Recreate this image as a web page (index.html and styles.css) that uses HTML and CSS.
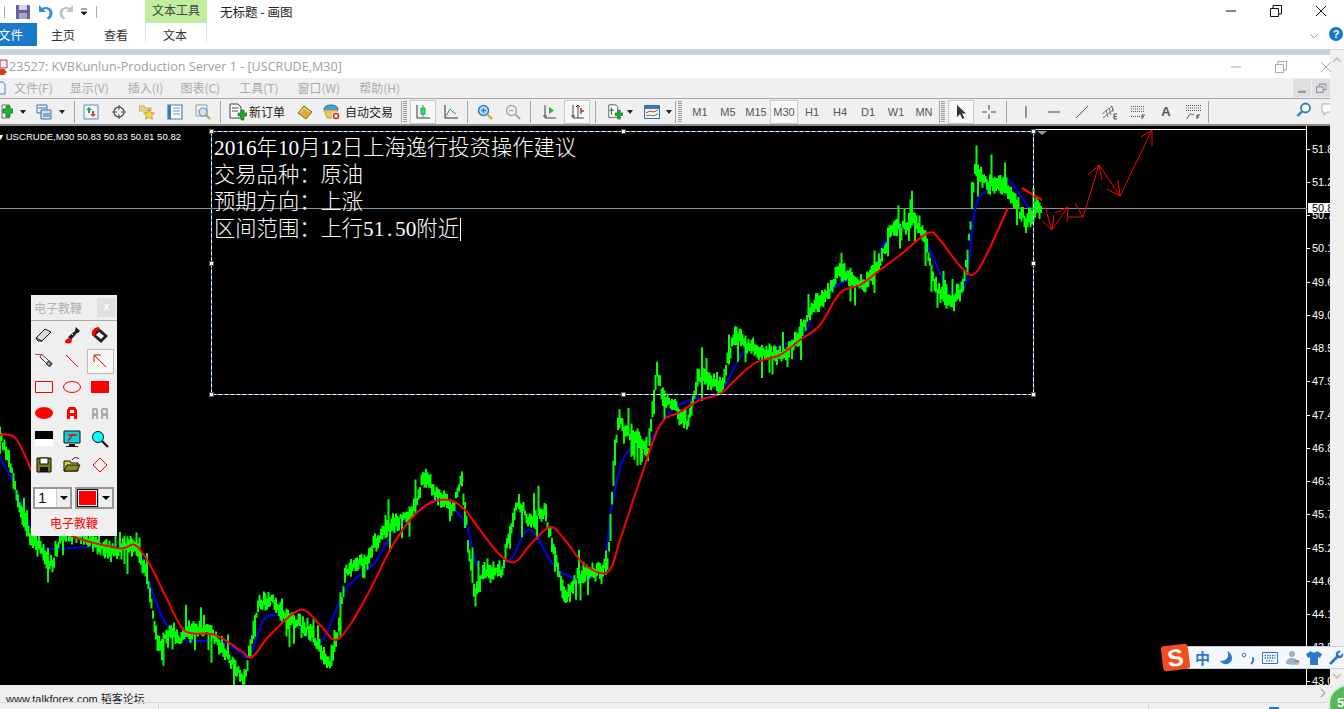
FILE: index.html
```html
<!DOCTYPE html>
<html lang="zh-CN">
<head>
<meta charset="utf-8">
<title>无标题 - 画图</title>
<link rel="stylesheet" href="styles.css">
</head>
<body>
<header class="ribbon">
  <div class="qat">
    <span class="qsep q1"></span>
    <svg class="qi" viewBox="0 0 16 16"><path d="M1 1h13l1 1v13H1z" fill="#6a5f9e"/><path d="M4 1h8v5H4z" fill="#d8d4e8"/><path d="M4 9h8v6H4z" fill="#a9a2c8"/></svg>
    <svg class="qi" viewBox="0 0 16 16"><path d="M2 1v7h7L6.500 5.500C9 4 12.500 5.500 12.500 9c0 2-1 4-3 5l2 1.500c3-1.500 4-4 4-6.500 0-5-6-7.500-10.500-5z" fill="#2f8fdc"/></svg>
    <svg class="qi" viewBox="0 0 16 16"><path d="M14 1v7H7l2.500-2.500C7 4 3.500 5.500 3.500 9c0 2 1 4 3 5l-2 1.500c-3-1.500-4-4-4-6.500 0-5 6-7.500 10.500-5z" fill="#b9c6d2"/></svg>
    <svg class="qdd" viewBox="0 0 8 8"><path d="M1 1h6M1 4h6L4 7z" fill="#222" stroke="#222" stroke-width=".8"/></svg>
    <span class="qsep q2"></span>
    <span class="ctx-head">文本工具</span>
    <span class="doc-title">无标题 - 画图</span>
    <div class="winbtns">
      <svg viewBox="0 0 12 12"><path d="M1 6h10" stroke="#111"/></svg>
      <svg viewBox="0 0 12 12"><path d="M.5 3.500h8v8h-8zM3 3V.500h8.500V9H9" fill="none" stroke="#111"/></svg>
      <svg viewBox="0 0 12 12"><path d="M1 1l10 10M11 1L1 11" stroke="#111"/></svg>
    </div>
  </div>
  <nav class="tabs">
    <span class="tab-file">文件</span>
    <span class="tab tab-home">主页</span>
    <span class="tab tab-view">查看</span>
    <span class="tab-text">文本</span>
    <svg class="chev" viewBox="0 0 10 6"><path d="M1 1l4 4 4-4" fill="none" stroke="#aaa"/></svg>
    <span class="help">?</span>
  </nav>
</header>
<div class="work">
  <main class="mt">
    <div class="band"></div>
    <div class="mt-title">
      <svg class="mt-ico" viewBox="0 0 8 16"><path d="M0 1h7v8H0z" fill="#e9eef5" stroke="#b33"/><path d="M0 10h4l3 3-3 3H0z" fill="#d43a1e"/></svg>
      <span>23527: KVBKunlun-Production Server 1 - [USCRUDE,M30]</span>
      <div class="mt-btns">
        <svg viewBox="0 0 12 12"><path d="M1 6h10" stroke="#aaa"/></svg>
        <svg viewBox="0 0 12 12"><path d="M.5 3.500h8v8h-8zM3 3V.500h8.500V9H9" fill="none" stroke="#aaa"/></svg>
        <svg viewBox="0 0 12 12"><path d="M1 1l10 10M11 1L1 11" stroke="#aaa"/></svg>
      </div>
    </div>
    <div class="menu">
      <svg class="menu-ico" viewBox="0 0 6 14"><path d="M-3 1h6l2 2v10h-8z" fill="#eef4fb" stroke="#4a86c0"/></svg>
      <span class="m1">文件(F)</span><span class="m2">显示(V)</span><span class="m3">插入(I)</span><span class="m2">图表(C)</span><span class="m3">工具(T)</span><span class="m3">窗口(W)</span><span class="m3">帮助(H)</span>
      <div class="menu-btns">
        <span class="mb"><svg viewBox="0 0 10 10"><path d="M1 8h7" stroke="#8f9aa5" stroke-width="2"/></svg></span>
        <span class="mb"><svg viewBox="0 0 10 10"><path d="M.500 3.500h6v5h-6zM3 3V1h6v5H7" fill="none" stroke="#8f9aa5"/></svg></span>
      </div>
    </div>
    <div class="toolbar">
      <span class="b first"><svg viewBox="0 0 16 16"><path d="M5 1h7v13H5z" fill="#eef" stroke="#667"/><path d="M6 5h3V2h4v3h3v4h-3v4H9V9H6z" fill="#1fb52f" stroke="#0a6f16" stroke-width=".7"/></svg></span><span class="d"></span>
      <span class="b ml2"><svg viewBox="0 0 16 16"><path d="M1 1h10v8H1z" fill="#eaf2fb" stroke="#3b6fa8"/><path d="M5 6h10v9H5z" fill="#cfe1f5" stroke="#3b6fa8"/><path d="M2 4h8M7 10h7M7 12h7" stroke="#3b6fa8"/></svg></span><span class="d"></span>
      <span class="sep sep-a"></span>
      <span class="b"><svg viewBox="0 0 16 16"><path d="M1 1h14v14H1z" fill="#eef5fb" stroke="#5b8fc0"/><path d="M6 3l3 3H7v3H5V6H3z" fill="#19a33a"/><path d="M10 13l-3-3h2V7h2v3h2z" fill="#d8452a"/></svg></span>
      <span class="b"><svg viewBox="0 0 16 16"><circle cx="8" cy="8" r="5" fill="none" stroke="#555" stroke-width="1.400"/><path d="M8 1v5M8 10v5M1 8h5M10 8h5" stroke="#555"/></svg></span>
      <span class="b"><svg viewBox="0 0 16 16"><path d="M0 2h5l1 2h6v3H0z" fill="#f2d47a" stroke="#a88a3a" stroke-width=".6"/><path d="M10 5l1.700 3.400 3.800.6-2.700 2.600.6 3.700-3.400-1.800-3.400 1.800.6-3.700L4.500 9l3.800-.6z" fill="#f4d33c" stroke="#a88a3a" stroke-width=".7"/></svg></span>
      <span class="b"><svg viewBox="0 0 16 16"><path d="M1 1h14v14H1z" fill="#fff" stroke="#3d7fc2" stroke-width="1.200"/><path d="M1 1h3v14H1z" fill="#3d7fc2"/><path d="M6 4h7M6 7h7M6 10h7" stroke="#88a"/></svg></span>
      <span class="b"><svg viewBox="0 0 16 16"><path d="M1 1h11v11H1z" fill="#f4f4f4" stroke="#999"/><circle cx="8" cy="8" r="4" fill="#cfe3f2" stroke="#6a93b5" stroke-width="1.200"/><path d="M11 11l4 4" stroke="#c9a23a" stroke-width="2"/></svg></span>
      <span class="sep sep-b"></span>
      <span class="btxt"><svg viewBox="0 0 18 18"><path d="M1 1h8l3 3v11H1z" fill="#fff" stroke="#444"/><path d="M3 5h6M3 8h6" stroke="#444"/><path d="M9 10h3V7h3v3h3v3h-3v4h-3v-4H9z" fill="#1cab2e" stroke="#0a6f16" stroke-width=".6"/></svg>新订单</span>
      <span class="b ml5"><svg viewBox="0 0 16 16"><path d="M1 9l6-7 8 6-6 7z" fill="#d9ae3d" stroke="#8d6a1b"/><path d="M3 9l4-5 6 4" fill="none" stroke="#f4dd8b"/></svg></span>
      <span class="btxt auto"><svg viewBox="0 0 18 18"><ellipse cx="8" cy="6" rx="7" ry="4" fill="#4a9fd8" stroke="#2a6fa8"/><path d="M1 7l3 8h8l3-8z" fill="#e8c860" stroke="#a98a2a" stroke-width=".7"/><circle cx="13" cy="13" r="4" fill="#d42a1e" stroke="#fff"/><rect x="11.500" y="11.500" width="3" height="3" fill="#fff"/></svg>自动交易</span>
      <span class="sep sep-c"></span><span class="grip"></span>
      <span class="b on"><svg viewBox="0 0 16 16"><path d="M2 1v13h13" fill="none" stroke="#333"/><path d="M8 1v12" stroke="#0a6" /><path d="M6 4h4v6H6z" fill="#3ddc4c" stroke="#0a6"/></svg></span>
      <span class="b"><svg viewBox="0 0 16 16"><path d="M2 1v13h13" fill="none" stroke="#333"/><path d="M3 12L7 5l3 3 3 2" fill="none" stroke="#2a9a3a"/></svg></span>
      <span class="sep sep-d"></span>
      <span class="b"><svg viewBox="0 0 16 16"><circle cx="6.500" cy="6.500" r="5" fill="#bfe0f7" stroke="#2d7cc4" stroke-width="1.500"/><path d="M4 6.500h5M6.500 4v5" stroke="#2d7cc4" stroke-width="1.400"/><path d="M10.500 10.500l4.500 4.500" stroke="#d9a62a" stroke-width="2.200"/></svg></span>
      <span class="b"><svg viewBox="0 0 16 16"><circle cx="6.500" cy="6.500" r="5" fill="#f2f2f2" stroke="#aaa" stroke-width="1.500"/><path d="M4 6.500h5" stroke="#aaa" stroke-width="1.400"/><path d="M10.500 10.500l4.500 4.500" stroke="#aaa" stroke-width="2.200"/></svg></span>
      <span class="sep sep-e"></span>
      <span class="b"><svg viewBox="0 0 16 16"><path d="M4 1v13h11M2 12h4" fill="none" stroke="#444"/><path d="M8 3l5 3.500L8 10z" fill="#2fb24a"/></svg></span>
      <span class="b on"><svg viewBox="0 0 16 16"><path d="M4 1v13h11M2 12h4M9 1v13M7 3l2-2 2 2" fill="none" stroke="#444"/><path d="M15 7h-3M12 4v6" stroke="#c8321e" stroke-width="1.500"/></svg></span>
      <span class="sep sep-f"></span>
      <span class="b"><svg viewBox="0 0 18 18"><path d="M2 1h8l2 2v12H2z" fill="#fff" stroke="#555"/><path d="M5 4v8M3 7h5" stroke="#333"/><path d="M9 10h3V7h3v3h3v3h-3v4h-3v-4H9z" fill="#1cab2e" stroke="#0a6f16" stroke-width=".6"/></svg></span><span class="d d2"></span>
      <span class="b ml3"><svg viewBox="0 0 16 16"><path d="M.500 1.500h15v13H.500z" fill="#f6f6f6" stroke="#2f6ea8"/><path d="M1 2h14v3H1z" fill="#2f7cc0"/><path d="M2 9l4-2 3 1 5-2" fill="none" stroke="#c8321e"/><path d="M2 12l4-1 3 1 5-2" fill="none" stroke="#2a9a3a"/></svg></span><span class="d d3"></span>
      <span class="sep sep-g"></span><span class="grip g2"></span>
      <span class="p p1">M1</span><span class="p">M5</span><span class="p">M15</span><span class="p on">M30</span><span class="p">H1</span><span class="p">H4</span><span class="p">D1</span><span class="p">W1</span><span class="p">MN</span>
      <span class="sep sep-h"></span><span class="grip g3"></span>
      <span class="b on"><svg viewBox="0 0 16 16"><path d="M4 1v12l3-3 2.500 5 2-1-2.500-4.500h4z" fill="#333"/></svg></span>
      <span class="b"><svg viewBox="0 0 16 16"><path d="M8 1v5M8 10v5M1 8h5M10 8h5" stroke="#444"/></svg></span>
      <span class="sep sep-i"></span>
      <span class="b"><svg viewBox="0 0 16 16"><path d="M8 2v12" stroke="#444"/></svg></span>
      <span class="b"><svg viewBox="0 0 16 16"><path d="M2 8h12" stroke="#444"/></svg></span>
      <span class="b"><svg viewBox="0 0 16 16"><path d="M2 14L14 2" stroke="#555"/></svg></span>
      <span class="b"><svg viewBox="0 0 16 16"><path d="M0 10l10-8M1 14l11-9M4 6l2 7M7 4l2 7M10 2l1 6" fill="none" stroke="#555" stroke-width=".8"/><path d="M12 10h3M12 12.500h2.500M12 15h3M12 10v5" stroke="#444"/></svg></span>
      <span class="b"><svg viewBox="0 0 16 16"><path d="M1 2.500h13M1 5h13M1 7.500h13M1 12.500h9" stroke="#555" stroke-dasharray="1 1"/><path d="M12 11h3M12 13h2M12 11v4" stroke="#444"/></svg></span>
      <span class="b btxa">A</span>
      <span class="b"><svg viewBox="0 0 16 16"><path d="M0 1.500h15M0 4h15M0 6.500h15" stroke="#555" stroke-dasharray="1 1"/><path d="M1 15c2-5 4-6 7-4" fill="none" stroke="#555"/><path d="M11 11h3M11 13h2M11 11v4" stroke="#444"/></svg></span>
      <span class="sep sep-j"></span>
      <span class="tb-right">
        <svg viewBox="0 0 16 16"><circle cx="9.500" cy="6" r="4.500" fill="#fff" stroke="#2d7cc4" stroke-width="1.800"/><path d="M6 9.500L1.500 14" stroke="#2d7cc4" stroke-width="2.400"/></svg>
        <svg viewBox="0 0 16 16"><path d="M2 2h12v8H7l-3 3v-3H2z" fill="#fff" stroke="#aaa"/></svg>
      </span>
    </div>
    <div class="chart">
      <div class="plot">
        <svg class="draw" id="draw" viewBox="0 126 1307 559" aria-hidden="true">
          <path d="M0 208.500H1307" stroke="#7f93a3"/>
          <path d="M1033 129.500H1307" stroke="#fff"/>
          <polyline class="ma-b smooth" points="0,458 12,480 30,525 45,548 117,545 140,552 150,585 165,622 185,640 220,641 240,652 250,656 265,618 290,620 320,642 345,590 375,562 395,530 425,506 440,500 465,522 480,570 510,560 530,530 560,572 600,572 612,505 625,455 650,440 670,412 690,400 720,392 745,350 770,350 805,332 815,306 845,281 870,281 885,242 915,226 935,262 950,292 965,286 975,210 985,192 1005,178 1020,195 1030,210"/>
          <g id="price"></g>
          <polyline class="ma-r smooth" points="0,435 10,435 20,445 40,490 60,530 117,548 135,545 150,565 165,595 180,625 190,633 215,635 240,650 252,657 270,635 300,610 320,625 335,640 350,625 370,590 390,550 410,520 430,503 450,500 465,510 480,530 500,555 515,562 530,545 550,527 565,540 585,565 608,572 620,540 640,480 660,425 680,412 700,400 720,394 735,380 755,363 780,355 800,340 820,325 840,293 860,285 880,270 900,255 928,233 940,240 962,268 978,270 1008,208"/>
          <path class="ma-r2" d="M1022 188L1042 200"/>
          <path class="pen" d="M1045 207L1052 230L1068 207M1067 217H1083L1099 165L1120 196L1152 130M1042 221L1052 230L1054 215M1055 213L1068 207L1067 222M1075 203L1083 217M1088 175L1099 165L1102 180M1107 189L1120 196L1118 180M1141 137L1152 130V146"/>
          <rect class="sel-a" x="211.500" y="131.500" width="822" height="263"/>
          <rect class="sel-b" x="211.500" y="131.500" width="822" height="263"/>
          <path d="M1037 131H1047L1042 135z" fill="#8a9aa8"/>
        </svg>
        <div class="legend">▾ USCRUDE,M30 50.83 50.83 50.81 50.82</div>
        <div class="note">
          <p><span class="lat">2016</span>年<span class="lat">10</span>月<span class="lat">12</span>日上海逸行投资操作建议</p>
          <p>交易品种&#xFF1A;原油</p>
          <p>预期方向&#xFF1A;上涨</p>
          <p>区间范围&#xFF1A;上行<span class="lat">51<span class="dot">.</span>50</span>附近<span class="caret"></span></p>
          <i class="h h-tl"></i><i class="h h-tc"></i><i class="h h-tr"></i><i class="h h-ml"></i><i class="h h-mr"></i><i class="h h-bl"></i><i class="h h-bc"></i><i class="h h-br"></i>
        </div>
        <aside class="pen-panel">
          <div class="pp-head"><span>电子教鞭</span><b>x</b></div>
          <div class="pp-grid">
            <svg viewBox="0 0 18 18"><path d="M1 12l9-9 6 3-9 9H3z" fill="#ddd" stroke="#111"/><path d="M1 12l6 3" stroke="#111"/></svg>
            <svg viewBox="0 0 18 18"><path d="M13 1l4 4-2 2-1 0-6 7-3-3 7-6 0-1z" fill="#222"/><path d="M9 8l1 1" stroke="#fff"/><path d="M5 12l-3 3c-1 2 3 3 6 2l1-3z" fill="#f00"/></svg>
            <svg viewBox="0 0 18 18"><path d="M1 9l7-7 9 8-7 7z" fill="#222"/><path d="M5 9l3-3 5 4-3 3z" fill="#fff"/><path d="M1 9c-1-5 3-8 7-8l1 3c-3 0-5 2-5 6z" fill="#f00"/></svg>
            <svg viewBox="0 0 22 18"><path d="M0 1h8" stroke="#f00"/><path d="M8 1l13 11-3 4L6 4z" fill="#fff" stroke="#111"/><path d="M16 9l4 3-2 4-4-3z" fill="#999" stroke="#111"/></svg>
            <svg viewBox="0 0 18 18"><path d="M3 3l12 12" stroke="#f00"/></svg>
            <span class="pp-on"><svg viewBox="0 0 18 18"><path d="M3 3l12 12M3 3v7M3 3h7" fill="none" stroke="#f00"/></svg></span>
            <svg viewBox="0 0 18 18"><path d="M.500 3.500h17v11H.500z" fill="none" stroke="#f00"/></svg>
            <svg viewBox="0 0 18 18"><ellipse cx="9" cy="9" rx="8.500" ry="5.500" fill="none" stroke="#f00"/></svg>
            <svg viewBox="0 0 18 18"><path d="M0 3h18v12H0z" fill="#f00"/></svg>
            <svg viewBox="0 0 18 18"><ellipse cx="9" cy="9" rx="9" ry="6" fill="#f00"/></svg>
            <svg viewBox="0 0 18 18"><path d="M4 15V6l2-3h6l2 3v9h-3v-3H7v3zM7 6v3h4V6z" fill="#f00"/></svg>
            <svg viewBox="0 0 18 18"><path d="M1 15V6l1-2h4l1 2v9H5v-3H3v3zM3 6v3h2V6zM10 15V6l1-2h5l1 2v9h-2v-3h-3v3zM12 6v3h3V6z" fill="#aaa"/></svg>
            <svg viewBox="0 0 18 18"><path d="M0 1h18v8H0z" fill="#000"/><path d="M0 9h18v7H0z" fill="#fff"/></svg>
            <svg viewBox="0 0 18 18"><path d="M1 1h16v12H1z" fill="#00d4d8" stroke="#111"/><path d="M5 5h9M10 4L5 11" stroke="#f00" stroke-width="1.500"/><path d="M6 14h6v2h3v1H3v-1h3z" fill="#111"/></svg>
            <svg viewBox="0 0 18 18"><circle cx="7" cy="7" r="5.500" fill="#00ffff" stroke="#111"/><path d="M11 11l6 6" stroke="#111" stroke-width="2.200"/></svg>
            <svg viewBox="0 0 18 18"><path d="M2 2h14v14H2z" fill="#7f7a10" stroke="#111"/><path d="M5 2h8v6H5z" fill="#fff" stroke="#111"/><path d="M5 11h8v5H5z" fill="#111"/></svg>
            <svg viewBox="0 0 18 18"><path d="M1 5h6l1 2h7v8H1z" fill="#dccb4a" stroke="#111"/><path d="M1 15l3-6h13l-3 6z" fill="#8a8a1a" stroke="#111"/><path d="M9 4c2-3 5-3 7-1" fill="none" stroke="#111"/></svg>
            <svg viewBox="0 0 18 18"><path d="M9 2l7 7-7 7-7-7z" fill="none" stroke="#f00"/></svg>
          </div>
          <div class="pp-combos">
            <span class="combo"><span class="cv">1</span><span class="cb"></span></span>
            <span class="combo"><span class="cv cc"><i></i></span><span class="cb"></span></span>
          </div>
          <div class="pp-foot">电子教鞭</div>
        </aside>
        <div class="ime">
          <span class="ime-s">S</span>
          <span class="ime-bar">
            <span class="zh">中</span>
            <svg viewBox="0 0 16 16"><path d="M9 1c3 5 0 10-7 10 3 5 12 4 12-3 0-3-2-6-5-7z" fill="#2b78c8"/></svg>
            <svg viewBox="0 0 16 16"><circle cx="4" cy="5" r="1.800" fill="none" stroke="#2b78c8"/><path d="M12 8c2 0 2 3-1 6" fill="none" stroke="#2b78c8" stroke-width="2"/></svg>
            <svg viewBox="0 0 16 16"><path d="M.500 2.500h15v11H.500z" fill="#fff" stroke="#2b78c8"/><path d="M2.500 5.500h11M2.500 8h11M4 10.800h8" stroke="#2b78c8" stroke-dasharray="1.500 1" stroke-width="1.300"/></svg>
            <svg viewBox="0 0 16 16"><circle cx="8" cy="4" r="3" fill="#9fb0c2"/><path d="M2 14c0-5 3-6 6-6s5 1 6 4l-3 3z" fill="#9fb0c2"/><path d="M11 11h4l-2 4" fill="none" stroke="#667"/></svg>
            <svg viewBox="0 0 16 16"><path d="M5 1L0 4l2 4 2-1v8h8V7l2 1 2-4-5-3c-1 2-5 2-6 0z" fill="#2b78c8"/></svg>
            <svg viewBox="0 0 16 16"><path d="M15 3l-3 3-2-2 3-3c-3-1-6 1-5 5L1 13l2 2 7-7c4 1 6-2 5-5z" fill="#2b78c8"/></svg>
          </span>
        </div>
      </div>
      <div class="axis">
        <span>51.8</span><span>51.2</span><span>50.7</span><span>50.1</span><span>49.6</span><span>49.0</span><span>48.5</span><span>47.9</span><span>47.4</span><span>46.8</span><span>46.3</span><span>45.7</span><span>45.2</span><span>44.6</span><span>44.1</span><span>43.5</span><span>43.0</span>
        <em class="cur">50.8</em>
      </div>
    </div>
    <footer class="status">
      <span class="forum">www.talkforex.com 韬客论坛</span>
      <svg class="st-chev" viewBox="0 0 6 10"><path d="M1 1l4 4-4 4" fill="none" stroke="#aaa" stroke-width="1.500"/></svg>
      <div class="st-line"><i class="st-sep"></i><i class="st-sep st-sep2"></i><i class="st-blue"></i></div>
    </footer>
  </main>
  <div class="vscroll">
    <svg viewBox="0 0 10 6"><path d="M1 5l4-4 4 4" fill="none" stroke="#bbb" stroke-width="1.500"/></svg>
    <svg viewBox="0 0 10 6"><path d="M1 1l4 4 4-4" fill="none" stroke="#bbb" stroke-width="1.500"/></svg>
  </div>
</div>
<div class="badge">55</div>
<script src="chart.js"></script>
</body>
</html>
```
FILE: styles.css
```css
*{box-sizing:border-box}
html,body{margin:0;padding:0}
body{width:1344px;height:709px;overflow:hidden;position:relative;background:#fff;font-family:"Liberation Sans","Noto Sans CJK SC",sans-serif;display:flex;flex-direction:column}
svg{display:block}

.ribbon{height:50px;background:#fff;border-bottom:1px solid #d0d4da;flex:none}
.qat{height:23px;display:flex;align-items:center;position:relative}
.qsep{width:1px;height:12px;background:#aaa}
.q1{margin-left:4px;margin-right:10px}
.qi{width:16px;height:16px;margin-right:6px}
.qdd{width:8px;height:8px;margin-left:-1px}
.q2{margin-left:8px;margin-right:48px}
.ctx-head{width:62px;height:23px;background:#c0ee9c;font:12px/20px "Noto Sans CJK SC",sans-serif;color:#444;text-align:center}
.doc-title{margin-left:13px;font:12.500px/24px "Noto Sans CJK SC",sans-serif;color:#222}
.winbtns{position:absolute;left:1225px;top:5px;display:flex;gap:33px}
.winbtns svg{width:12px;height:12px}
.tabs{height:23px;display:flex;align-items:center;font:12px/23px "Noto Sans CJK SC",sans-serif;color:#333;position:relative}
.tab-file{width:37px;height:23px;background:#1979ca;color:#fff;text-indent:-2px;font-size:12.500px}
.tab{width:24px;text-align:center}
.tab-home{margin-left:14px}
.tab-view{margin-left:29px}
.tab-text{width:62px;height:20px;margin-left:17px;margin-top:-3px;border:1px solid #dfe2e6;border-width:0 1px;text-align:center;line-height:23px;text-indent:-2px}
.chev{width:10px;height:6px;position:absolute;left:1309px;top:10px}
.help{position:absolute;left:1329px;top:4px;width:14px;height:14px;border-radius:50%;background:#1676cc;color:#fff;font:bold 11px/14px "Liberation Sans",sans-serif;text-align:center}

.work{flex:1;display:flex;min-height:0}
.mt{flex:1;display:flex;flex-direction:column;min-width:0}
.band{height:5px;background:#c8d1e2;flex:none}
.mt-title{height:23px;display:flex;align-items:center;background:#fff;color:#a0a0a0;font:12.600px "Open Sans",sans-serif;position:relative;flex:none}
.mt-ico{width:8px;height:16px;margin-right:1px}
.mt-btns{position:absolute;left:1230px;top:6px;display:flex;gap:33px}
.mt-btns svg{width:12px;height:12px}
.menu{height:20px;background:#f0f0f0;display:flex;align-items:center;color:#aaa;font:12px/20px "Noto Sans CJK SC","Liberation Sans",sans-serif;position:relative;flex:none}
.menu span{white-space:nowrap}
.menu-ico{width:6px;height:14px;flex:none}
.m1{margin-left:8px}
.m2{margin-left:17px}
.m3{margin-left:19px}
.menu-btns{position:absolute;right:0;top:1px;display:flex;gap:1px}
.mb{width:18px;height:18px;background:#dfdfdf;display:flex;align-items:center;justify-content:center}
.mb svg{width:11px;height:11px}

.toolbar{height:28px;background:#f0f0f0;border-top:1px solid #a8a8a8;border-bottom:2px solid #8c8c8c;display:flex;align-items:center;flex:none;position:relative;overflow:hidden}
.b{width:28px;height:24px;display:flex;align-items:center;justify-content:center;flex:none}
.b svg{width:16px;height:16px}
.first{margin-left:-9px}
.first svg{width:16px;height:16px}
.d{width:9px;height:24px;position:relative;flex:none}
.d::after{content:"";position:absolute;left:1px;top:10px;border:3.500px solid transparent;border-top:4px solid #222;border-bottom:0}
.ml2{margin-left:2px}
.ml3{margin-left:3px}
.ml5{margin-left:5px}
.d2{margin-left:-3px}
.d3{margin-left:-1px}
.sep{width:1px;height:22px;background:#a6a6a6;flex:none}
.sep-a{margin:0 2px 0 7px}
.sep-b{margin:0 3px}
.sep-c{margin:0 1px 0 8px}
.sep-d{margin:0 3px 0 2px}
.sep-e{margin:0 4px 0 3px}
.sep-f{margin:0 5px 0 4px}
.sep-g{margin:0 2px 0 1px}
.sep-h{margin:0 1px 0 1px}
.sep-i{margin:0 5px 0 3px}
.sep-j{margin:0}
.grip{width:4px;height:22px;flex:none;margin-right:2px;background:repeating-linear-gradient(#999 0 1px,transparent 1px 2px)}
.btxt{height:24px;display:flex;align-items:center;gap:2px;padding-left:5px;font:12px "Noto Sans CJK SC",sans-serif;color:#222;flex:none;width:62px;white-space:nowrap}
.btxt svg{width:18px;height:18px;flex:none}
.auto{width:74px;gap:4px;padding-left:4px}
.b.on,.p.on{background:repeating-conic-gradient(#fff 0 25%,#f1f1f1 0 50%) 0 0/2px 2px;border:1px solid #c8c8c8}
.b.on{width:26px;margin:0 1px}
.p{width:28px;height:24px;font-size:11px;line-height:22px;color:#555;text-align:center;flex:none;border:1px solid transparent}
.p1{margin-left:2px}
.btxa{font:bold 13px "Liberation Sans",sans-serif;color:#555}
.tb-right{position:absolute;left:1296px;top:3px;display:flex;gap:8px}
.tb-right svg{width:16px;height:16px}

.chart{height:559px;flex:none;background:#000;display:flex;position:relative}
.plot{width:1307px;position:relative;border-right:1px solid #fff;flex:none}
.draw{position:absolute;left:0;top:0;width:1307px;height:559px}
.ma-b{fill:none;stroke:#0000e0;stroke-width:2.200}
.ma-r{fill:none;stroke:#f00;stroke-width:2}
.ma-r2{fill:none;stroke:#f00;stroke-width:2.500}
.pen{fill:none;stroke:#f00;stroke-width:1}
.sel-a{fill:none;stroke:#1f78d8}
.sel-b{fill:none;stroke:#fff;stroke-dasharray:4 2}
.legend{position:absolute;left:-2px;top:5px;color:#fff;font-size:9.600px;line-height:12px;white-space:nowrap}
.note{position:absolute;left:211px;top:5px;width:823px;height:264px;padding:1px 0 0 3px;color:#fff;font:300 21.300px/27px "Noto Sans CJK SC",sans-serif}
.note p{margin:0;white-space:nowrap;height:27px}
.lat{font-family:"Liberation Serif",serif;font-weight:400}
.dot{display:inline-block;width:.5em;text-align:center}
.caret{display:inline-block;width:1px;height:23px;background:#fff;vertical-align:-5px;margin-left:1px}
.h{position:absolute;width:5px;height:5px;background:#fff;border:1px solid #555}
.h-tl{left:-2px;top:-2px}.h-tc{left:410px;top:-2px}.h-tr{right:-2px;top:-2px}
.h-ml{left:-2px;top:130px}.h-mr{right:-2px;top:130px}
.h-bl{left:-2px;bottom:-2px}.h-bc{left:410px;bottom:-2px}.h-br{right:-2px;bottom:-2px}

.pen-panel{position:absolute;left:31px;top:169px;width:86px;height:241px;background:#efefef;display:flex;flex-direction:column}
.pp-head{height:26px;border-bottom:1px solid #a8a8a8;display:flex;align-items:center;justify-content:space-between;padding:0 1px 0 3px;color:#b0b0b0;font:12px "Noto Sans CJK SC",sans-serif;flex:none}
.pp-head b{width:19px;height:19px;background:#e0e0e0;color:#fff;font:bold 10px/18px "Liberation Sans",sans-serif;text-align:center}
.pp-grid{display:grid;grid-template-columns:repeat(3,28px);grid-auto-rows:26px;justify-items:center;align-items:center;margin:1px 0 0 -1px;padding-left:0}
.pp-grid svg{width:18px;height:18px}
.pp-on{width:27px;height:25px;display:flex;align-items:center;justify-content:center;border:1px solid #bbb;background:repeating-conic-gradient(#fff 0 25%,#eee 0 50%) 0 0/2px 2px}
.pp-combos{display:flex;gap:3px;padding-left:2px;margin-top:9px;flex:none}
.combo{width:39px;height:22px;border:2px solid #999;display:flex;background:#fff}
.cv{width:21px;font:15px/18px "Liberation Sans",sans-serif;color:#111;padding-left:3px}
.cc{padding:1px;border:1px solid #111;background:#fff;margin:0}
.cc i{display:block;width:100%;height:100%;background:#f00}
.cb{flex:1;background:#efefef;border-left:1px solid #ccc;position:relative}
.cb::after{content:"";position:absolute;left:3px;top:7px;border:4px solid transparent;border-top:4px solid #000;border-bottom:0}
.pp-foot{color:#f00;font:12px/22px "Noto Sans CJK SC",sans-serif;text-align:center;margin-top:3px}

.ime{position:absolute;left:1162px;top:518px;width:182px;height:27px;display:flex;align-items:center;z-index:2}
.ime-s{width:27px;height:25px;background:#f04e1e;color:#fff;font:bold 24px/25px "Liberation Sans",sans-serif;text-align:center;border-radius:3px;transform:rotate(-7deg);position:relative;z-index:1;flex:none}
.ime-bar{margin-left:-4px;width:160px;height:23px;background:#f4f8fd;border:1px solid #c4d4e6;display:flex;align-items:center;padding-left:9px;gap:6px;flex:none}
.ime-bar svg{width:16px;height:16px;flex:none}
.zh{font:bold 15px/20px "Noto Sans CJK SC",sans-serif;color:#2b78c8;width:16px;margin-right:1px}

.axis{width:23px;height:559px;overflow:hidden;display:flex;flex-direction:column;padding-top:6.500px;color:#fff;font-size:11px;position:relative;flex:none}
.axis span{height:33.250px;line-height:33px;padding-left:5px;flex:none;white-space:nowrap;position:relative}
.axis span::before{content:"";position:absolute;left:0;top:16px;width:3px;height:1px;background:#fff}
.cur{position:absolute;left:1px;top:77px;width:22px;height:10px;background:#fff;color:#000;font-style:normal;font-size:11px;line-height:10px;padding-left:4px;white-space:nowrap;overflow:hidden}

.status{height:24px;background:#f0f0f0;position:relative;flex:none}
.forum{position:absolute;left:6px;top:7px;font-size:11px;line-height:15px;color:#222;white-space:nowrap;font-family:"Liberation Sans","Noto Sans CJK SC",sans-serif}
.st-chev{position:absolute;left:1320px;top:3px;width:6px;height:10px}
.st-line{position:absolute;left:0;right:0;top:17px;bottom:0;border-top:1px solid #d8d8d8}
.st-sep{position:absolute;left:158px;top:0;bottom:0;width:1px;background:#d8d8d8}
.st-sep2{left:1148px}
.st-blue{position:absolute;left:1269px;bottom:0;width:10px;height:2px;background:#1979ca}

.vscroll{width:14px;background:#f0f0f0;display:flex;flex-direction:column;justify-content:space-between;align-items:center;padding:7px 0 30px;flex:none}
.vscroll svg{width:10px;height:6px}
.badge{position:absolute;left:1328px;top:684px;width:40px;height:40px;border-radius:50%;background:#55b95c;border:2px solid #d8eeda;color:#fff;font:bold 13px/34px "Liberation Sans",sans-serif;padding-left:7px}
```
FILE: chart.js
```js
(function () {
  var NS = 'http://www.w3.org/2000/svg';
  var pts = [[0,435],[6,450],[12,470],[20,510],[28,530],[38,545],[52,567],[62,530],[90,540],[110,552],[135,545],[145,570],[152,605],[158,645],[172,632],[182,640],[192,630],[208,628],[225,650],[236,668],[244,682],[250,650],[258,605],[270,597],[284,615],[296,622],[310,632],[322,650],[330,665],[338,630],[346,572],[368,558],[384,530],[398,520],[415,507],[425,475],[436,495],[452,508],[462,478],[468,540],[475,598],[484,570],[502,572],[510,530],[518,500],[530,522],[545,512],[556,560],[565,600],[578,578],[596,572],[608,565],[612,495],[618,420],[632,436],[648,450],[657,372],[664,398],[676,408],[688,428],[697,378],[722,386],[734,335],[750,346],[774,356],[798,342],[808,312],[824,298],[840,270],[862,285],[876,270],[890,232],[902,228],[915,218],[926,240],[934,285],[950,305],[964,285],[970,230],[975,168],[988,184],[1006,186],[1014,200],[1026,222],[1034,214],[1042,206]];
  var seed = 20161012;
  function rnd() { seed = (seed * 1664525 + 1013904223) >>> 0; return seed / 4294967296; }
  var d = '', k = 0;
  for (var x = 0; x <= 1042; x += 1.5) {
    while (k < pts.length - 2 && pts[k + 1][0] < x) k++;
    var a = pts[k], b = pts[k + 1];
    var t = (x - a[0]) / (b[0] - a[0]);
    var y = a[1] + (b[1] - a[1]) * t;
    var up = 2 + rnd() * 8 + (rnd() < 0.14 ? rnd() * 22 : 0);
    var dn = 2 + rnd() * 8 + (rnd() < 0.14 ? rnd() * 22 : 0);
    var off = (rnd() - 0.5) * 6;
    d += 'M' + x.toFixed(1) + ' ' + Math.min(685, y + off - up).toFixed(1) + 'V' + Math.min(685, y + off + dn).toFixed(1);
  }
  var p = document.createElementNS(NS, 'path');
  p.setAttribute('d', d);
  p.setAttribute('stroke', '#00ff00');
  p.setAttribute('stroke-width', '2');
  p.setAttribute('fill', 'none');
  document.getElementById('price').appendChild(p);

  // Moving averages: round the hand-picked points into a smooth curve.
  document.querySelectorAll('polyline.smooth').forEach(function (line) {
    var q = line.getAttribute('points').trim().split(/\s+/).map(function (s) { return s.split(',').map(Number); });
    var out = 'M' + q[0][0] + ' ' + q[0][1];
    for (var i = 0; i < q.length - 1; i++) {
      var p0 = q[Math.max(i - 1, 0)], p1 = q[i], p2 = q[i + 1], p3 = q[Math.min(i + 2, q.length - 1)];
      out += 'C' + (p1[0] + (p2[0] - p0[0]) / 6).toFixed(1) + ' ' + (p1[1] + (p2[1] - p0[1]) / 6).toFixed(1) + ' ' +
        (p2[0] - (p3[0] - p1[0]) / 6).toFixed(1) + ' ' + (p2[1] - (p3[1] - p1[1]) / 6).toFixed(1) + ' ' + p2[0] + ' ' + p2[1];
    }
    var path = document.createElementNS(NS, 'path');
    path.setAttribute('d', out);
    path.setAttribute('class', line.getAttribute('class'));
    line.parentNode.replaceChild(path, line);
  });
})();
```
